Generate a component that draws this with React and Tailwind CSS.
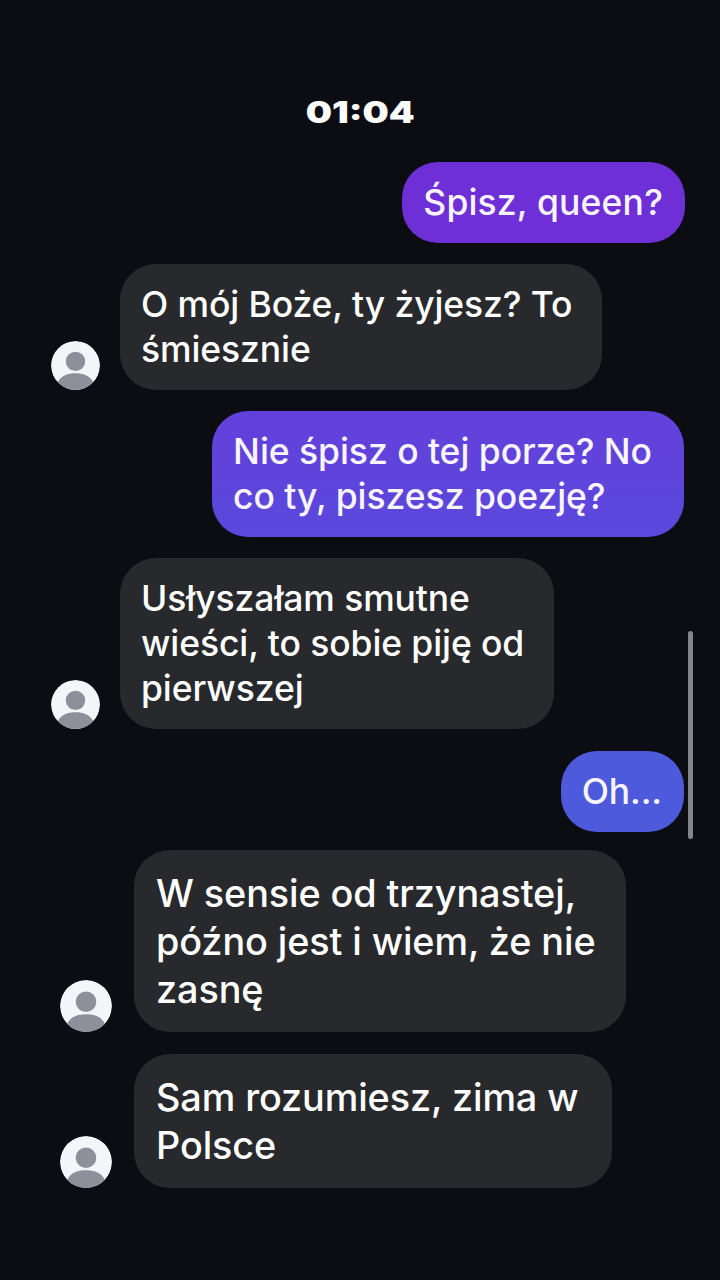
import React from "react";

const Avatar = ({ big }) => (
  <svg viewBox="0 0 48 48" className={`shrink-0 rounded-full ${big ? "h-[52px] w-[52px]" : "h-[49px] w-[49px]"}`}>
    <circle cx="24" cy="24" r="24" fill="#f4f5f8" />
    <circle cx="24" cy="20" r="9.5" fill="#8e8f9b" />
    <path d="M6.5 40.5C10 33.5 16.5 31.5 24 31.5s14 2 17.5 9C37 45.5 31 48 24 48S11 45.5 6.5 40.5Z" fill="#8e8f9b" />
  </svg>
);

const Sent = ({ className = "", lines, color, pad = "pr-[22px] tracking-[-0.1px]" }) => (
  <div className={`flex justify-end ${className}`}>
    <div className={`rounded-[36px] py-[18px] pl-[21px] text-[35.5px] leading-[45px] font-medium whitespace-nowrap text-[#f8f5ff] ${pad} ${color}`}>
      {lines.map((l) => (
        <div key={l}>{l}</div>
      ))}
    </div>
  </div>
);

const Received = ({ className = "", lines, big, pad = "pr-[30px]" }) => (
  <div className={`flex items-end ${big ? "pl-[60px] gap-[22px]" : "pl-[51px] gap-[20px]"} ${className}`}>
    <Avatar big={big} />
    <div
      className={`rounded-[36px] bg-[#28292d] font-medium whitespace-nowrap text-white ${pad} ${
        big
          ? "py-[19px] pl-[22px] text-[37.8px] leading-[48px] tracking-[-0.1px]"
          : "py-[18px] pl-[21px] text-[35.5px] leading-[45px] tracking-[-0.1px]"
      }`}
    >
      {lines.map((l) => (
        <div key={l}>{l}</div>
      ))}
    </div>
  </div>
);

export default function App() {
  return (
    <div className="relative h-[1280px] w-[720px] overflow-hidden bg-[#0b0d13] font-['Inter',sans-serif]">
      <div className="flex h-[162px] items-start justify-center pt-[94px]">
        <span className="origin-center scale-x-[1.23] text-[30px] leading-[36px] font-black text-white">01:04</span>
      </div>

      <Sent className="pr-[35px]" pad="pr-[22px] tracking-[0.15px]" lines={["Śpisz, queen?"]} color="bg-[#6e2fd6]" />
      <Received className="mt-[21px]" lines={["O mój Boże, ty żyjesz? To", "śmiesznie"]} />
      <Sent className="mt-[21px] pr-[36px]" pad="pr-[32px] tracking-[-0.05px]" lines={["Nie śpisz o tej porze? No", "co ty, piszesz poezję?"]} color="bg-gradient-to-b from-[#6340db] to-[#5a48dc]" />
      <Received className="mt-[21px]" lines={["Usłyszałam smutne", "wieści, to sobie piję od", "pierwszej"]} />
      <Sent className="mt-[22px] pr-[36px]" lines={["Oh..."]} color="bg-[#4d5adb]" />
      <Received big className="mt-[18px]" pad="pr-[30px]" lines={["W sensie od trzynastej,", "późno jest i wiem, że nie", "zasnę"]} />
      <Received big className="mt-[22px]" pad="pr-[34px]" lines={["Sam rozumiesz, zima w", "Polsce"]} />

      <div className="absolute left-[688px] top-[631px] h-[208px] w-[5px] rounded-full bg-[#85868c]" />
    </div>
  );
}
